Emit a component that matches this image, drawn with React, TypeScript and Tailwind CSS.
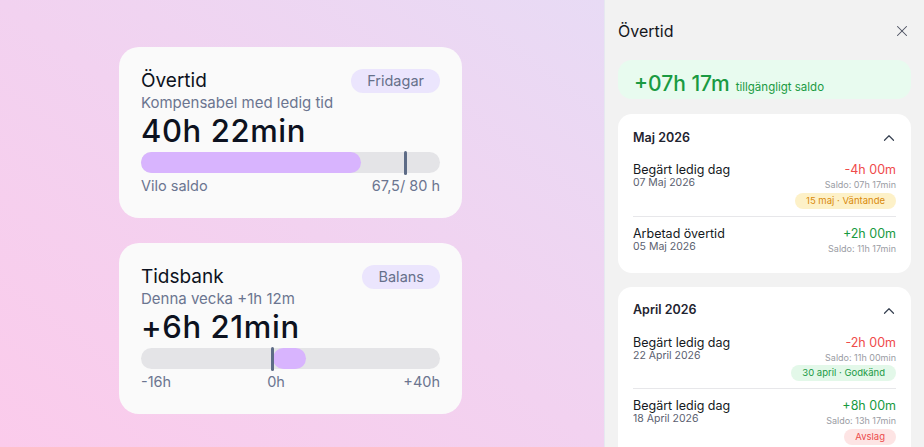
import React from "react";
import { ChevronUp, X } from "lucide-react";

interface Entry {
  title: string;
  date: string;
  amount: string;
  positive: boolean;
  saldo: string;
  status?: { label: string; tone: "pending" | "approved" | "rejected" };
}

interface Month {
  name: string;
  entries: Entry[];
}

const months: Month[] = [
  {
    name: "Maj 2026",
    entries: [
      {
        title: "Begärt ledig dag",
        date: "07 Maj 2026",
        amount: "-4h 00m",
        positive: false,
        saldo: "Saldo: 07h 17min",
        status: { label: "15 maj · Väntande", tone: "pending" },
      },
      {
        title: "Arbetad övertid",
        date: "05 Maj 2026",
        amount: "+2h 00m",
        positive: true,
        saldo: "Saldo: 11h 17min",
      },
    ],
  },
  {
    name: "April 2026",
    entries: [
      {
        title: "Begärt ledig dag",
        date: "22 April 2026",
        amount: "-2h 00m",
        positive: false,
        saldo: "Saldo: 11h 00min",
        status: { label: "30 april · Godkänd", tone: "approved" },
      },
      {
        title: "Begärt ledig dag",
        date: "18 April 2026",
        amount: "+8h 00m",
        positive: true,
        saldo: "Saldo: 13h 17min",
        status: { label: "Avslag", tone: "rejected" },
      },
    ],
  },
];

const toneClass = {
  pending: "bg-[#fdf1c8] text-[#d98a0b]",
  approved: "bg-[#e3f8e9] text-[#1a9a45]",
  rejected: "bg-[#fde4e4] text-[#ec4c4c]",
};

const StatusBadge: React.FC<{ label: string; tone: keyof typeof toneClass }> = ({ label, tone }) => (
  <span
    className={`mt-[2.5px] flex h-4 items-center rounded-full px-[11px] text-[9.5px] leading-none ${toneClass[tone]}`}
  >
    {label}
  </span>
);

const MonthCard: React.FC<{ month: Month }> = ({ month }) => (
  <div className="rounded-[14px] bg-white px-[15px] pb-[12px] pt-[14px]">
    <div className="mb-[5px] flex h-5 items-center justify-between">
      <span className="text-[12.5px] font-semibold text-[#1f2430]">{month.name}</span>
      <ChevronUp size={18} strokeWidth={1.6} className="-mr-[2px] text-[#374151]" />
    </div>
    <div className="divide-y divide-[#e7e7ea]">
      {month.entries.map((e, i) => (
        <div key={i} className="flex justify-between pb-[7px] pt-[10px]">
          <div className="flex flex-col">
            <span className="text-[12.5px] leading-[14px] text-[#151922]">{e.title}</span>
            <span className="text-[10.5px] leading-[11px] text-[#5b6170]">{e.date}</span>
          </div>
          <div className="flex flex-col items-end">
            <span
              className={`text-[12.5px] leading-[14px] ${e.positive ? "text-[#179a3f]" : "text-[#ef4b4b]"}`}
            >
              {e.amount}
            </span>
            <span className="mt-[2px] text-[9px] leading-[11px] text-[#9a9ca3]">{e.saldo}</span>
            {e.status && <StatusBadge label={e.status.label} tone={e.status.tone} />}
          </div>
        </div>
      ))}
    </div>
  </div>
);

const SummaryCard: React.FC<{
  title: string;
  badge: string;
  subtitle: string;
  value: string;
  children: React.ReactNode;
}> = ({ title, badge, subtitle, value, children }) => (
  <div className="w-[343px] rounded-[20px] bg-[#fafafa] p-[22px]">
    <div className="flex h-6 items-center justify-between">
      <span className="text-[19px] text-[#0d1220]">{title}</span>
      <span className="flex h-6 items-center rounded-full bg-[#ebe5fd] px-4 text-[14.5px] text-[#66708a]">
        {badge}
      </span>
    </div>
    <div className="text-[15px] leading-5 text-[#6b7590]">{subtitle}</div>
    <div className="text-[31px] font-medium leading-9 tracking-[0.02em] text-[#0d1220]">{value}</div>
    {children}
  </div>
);

export default function App() {
  return (
    <div className="flex h-[447px] w-[924px] overflow-hidden font-['Inter',sans-serif]">
      <div className="flex-1 bg-gradient-to-tr from-[#fbcbeb] via-[#f2d2f0] to-[#e8dbf5] pl-[119px] pt-[47px]">
        <div className="flex flex-col gap-[25px]">
          <SummaryCard
            title="Övertid"
            badge="Fridagar"
            subtitle="Kompensabel med ledig tid"
            value="40h 22min"
          >
            <div className="relative mt-[3px] h-[21px] rounded-full bg-[#e4e4e7]">
              <div className="h-full w-[73.5%] rounded-full bg-[#d8b4fe]" />
              <div className="absolute -top-[1.5px] left-[88%] h-6 w-[3px] rounded-sm bg-[#5d6b86]" />
            </div>
            <div className="mt-[3px] flex justify-between text-[14.5px] leading-5 text-[#6b7590]">
              <span>Vilo saldo</span>
              <span>67,5/ 80 h</span>
            </div>
          </SummaryCard>
          <SummaryCard
            title="Tidsbank"
            badge="Balans"
            subtitle="Denna vecka +1h 12m"
            value="+6h 21min"
          >
            <div className="relative mt-[3px] h-[21px] rounded-full bg-[#e4e4e7]">
              <div className="absolute left-[44%] top-0 h-full w-[11.1%] rounded-full bg-[#d8b4fe]" />
              <div className="absolute -top-[1.5px] left-[43.6%] h-6 w-[3px] rounded-sm bg-[#5d6b86]" />
            </div>
            <div className="relative mt-[3px] flex justify-between text-[14.5px] leading-5 text-[#6b7590]">
              <span>-16h</span>
              <span className="absolute left-[42.2%]">0h</span>
              <span>+40h</span>
            </div>
          </SummaryCard>
        </div>
      </div>

      <aside className="w-[320px] shrink-0 border-l border-[#e6e8f0] bg-[#f2f2f2] px-[13px] pt-[18px]">
        <div className="flex h-[26px] items-center justify-between">
          <span className="text-[16px] text-[#15171c]">Övertid</span>
          <X size={18} strokeWidth={1.4} className="text-[#4b5060]" />
        </div>
        <div className="mt-[16px] flex h-[39px] items-baseline rounded-[14px] bg-[#e8fbef] px-[16px] pt-[8px]">
          <span className="text-[21px] font-medium text-[#1a9a42]">+07h 17m</span>
          <span className="ml-[6px] text-[11.5px] text-[#1a9a42]">tillgängligt saldo</span>
        </div>
        <div className="mt-[15px] flex flex-col gap-[14px]">
          {months.map((m) => (
            <MonthCard key={m.name} month={m} />
          ))}
        </div>
      </aside>
    </div>
  );
}
